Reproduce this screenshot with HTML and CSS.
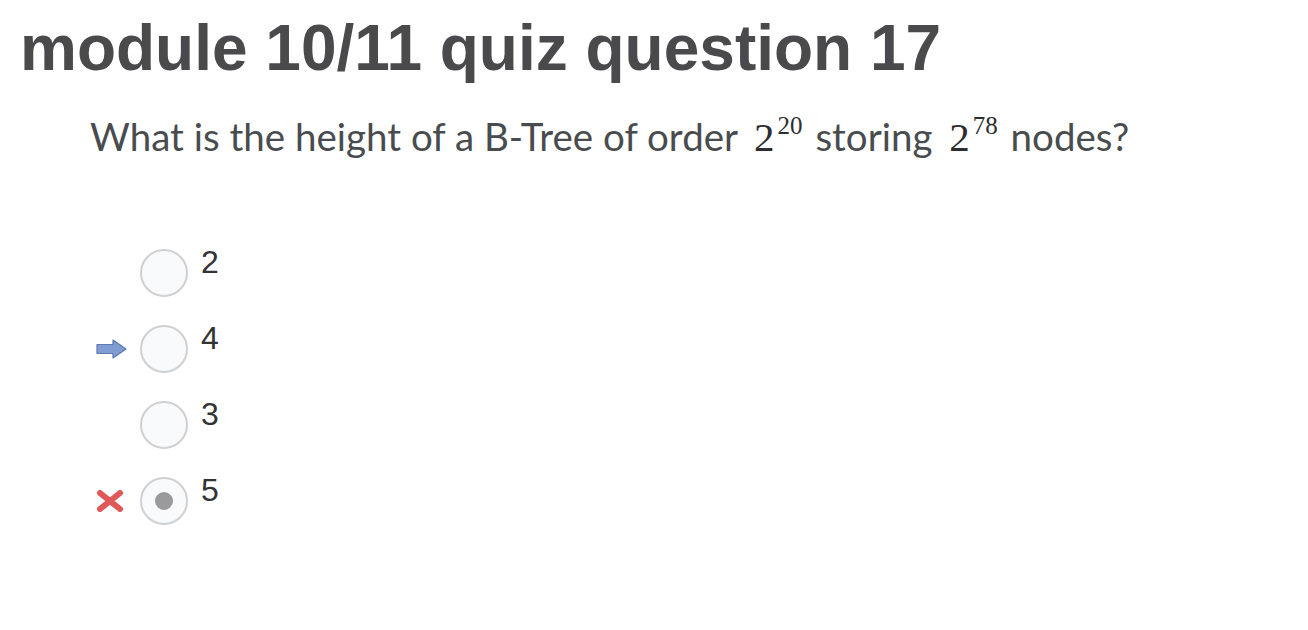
FILE: index.html
```html
<!DOCTYPE html>
<html>
<head>
<meta charset="utf-8">
<link rel="stylesheet" href="styles.css">
</head>
<body>
<h1 class="title">module 10/11 quiz question 17</h1>
<p class="question">What is the height of a B-Tree of order <span class="math">2<sup>20</sup></span> storing <span class="math">2<sup>78</sup></span> nodes?</p>
<div class="options">
  <div class="option">
    <span class="marker"></span>
    <span class="radio"></span>
    <span class="label">2</span>
  </div>
  <div class="option">
    <span class="marker">
      <svg width="31" height="20" viewBox="0 0 31 20"><path d="M1 5.5 H17 V1 L30 10 L17 19 V14.5 H1 Z" fill="#7f9dd0" stroke="#5b79b1" stroke-width="1.2" stroke-linejoin="round"/></svg>
    </span>
    <span class="radio"></span>
    <span class="label">4</span>
  </div>
  <div class="option">
    <span class="marker"></span>
    <span class="radio"></span>
    <span class="label">3</span>
  </div>
  <div class="option">
    <span class="marker">
      <svg width="28" height="22" viewBox="0 0 28 22"><path d="M4 3 L24 19 M24 3 L4 19" stroke="#e05858" stroke-width="6" stroke-linecap="round"/></svg>
    </span>
    <span class="radio checked"></span>
    <span class="label">5</span>
  </div>
</div>
</body>
</html>
```
FILE: styles.css
```css
html, body {
  margin: 0;
  padding: 0;
  background: #ffffff;
}
body {
  padding: 10px 0 0 20px;
}
.title {
  font-family: "Liberation Sans", Arial, sans-serif;
  font-weight: bold;
  font-size: 64px;
  line-height: 76px;
  color: #4a4a4c;
  margin: 0;
}
.question {
  font-family: Lato, "Liberation Sans", sans-serif;
  font-size: 38.5px;
  line-height: 48px;
  color: #494c4e;
  margin: 26px 0 0 70px;
}
.math {
  font-family: "Liberation Serif", "DejaVu Serif", serif;
  font-size: 41px;
  color: #2e2e30;
  margin: 0 3px 0 7px;
}
.math sup {
  font-size: 25px;
  vertical-align: 17px;
  line-height: 0;
  margin-left: 3px;
}
.options {
  display: flex;
  flex-direction: column;
  gap: 28px;
  margin: 88px 0 0 76px;
}
.option {
  display: flex;
  align-items: flex-start;
  height: 48px;
}
.marker {
  width: 44px;
  height: 48px;
  display: flex;
  align-items: center;
}
.radio {
  box-sizing: border-box;
  width: 48px;
  height: 48px;
  border: 2px solid #cfd0d2;
  border-radius: 50%;
  background: #f9fafb;
  display: flex;
  align-items: center;
  justify-content: center;
}
.radio.checked::after {
  content: "";
  width: 18px;
  height: 18px;
  border-radius: 50%;
  background: #9a9a9c;
}
.label {
  font-family: "Liberation Sans", Arial, sans-serif;
  font-size: 32px;
  line-height: 32px;
  color: #333333;
  margin-left: 13px;
  margin-top: -3px;
}
```
